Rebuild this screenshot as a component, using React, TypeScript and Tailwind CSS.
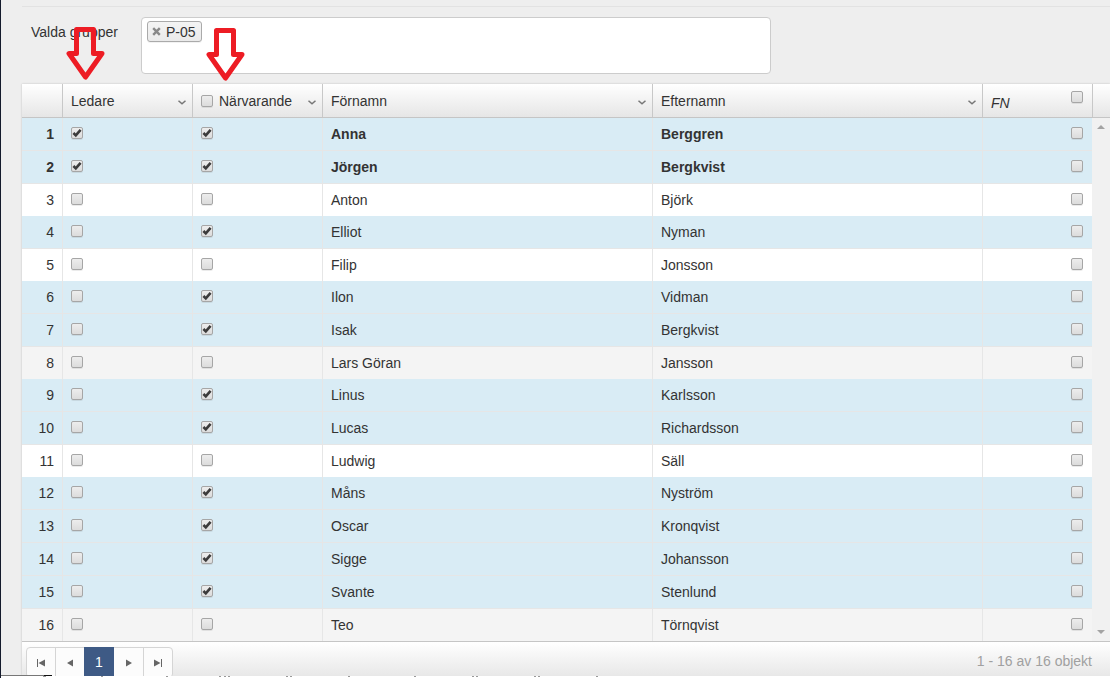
import React, { useState } from 'react';

type Person = {
  first: string;
  last: string;
  leader?: boolean;
  present?: boolean;
  shade?: string;
};

const people: Person[] = [
  { first: 'Anna', last: 'Berggren', leader: true, present: true },
  { first: 'Jörgen', last: 'Bergkvist', leader: true, present: true },
  { first: 'Anton', last: 'Björk' },
  { first: 'Elliot', last: 'Nyman', present: true },
  { first: 'Filip', last: 'Jonsson' },
  { first: 'Ilon', last: 'Vidman', present: true },
  { first: 'Isak', last: 'Bergkvist', present: true },
  { first: 'Lars Göran', last: 'Jansson', shade: 'bg-[#f4f4f4]' },
  { first: 'Linus', last: 'Karlsson', present: true },
  { first: 'Lucas', last: 'Richardsson', present: true },
  { first: 'Ludwig', last: 'Säll' },
  { first: 'Måns', last: 'Nyström', present: true },
  { first: 'Oscar', last: 'Kronqvist', present: true },
  { first: 'Sigge', last: 'Johansson', present: true },
  { first: 'Svante', last: 'Stenlund', present: true },
  { first: 'Teo', last: 'Törnqvist', shade: 'bg-[#f4f4f4]' },
];

const Check: React.FC<{ label: string; checked?: boolean }> = ({ label, checked = false }) => {
  const [on, setOn] = useState(checked);

  return (
    <span className="relative block size-3 shrink-0">
      <input
        type="checkbox"
        aria-label={label}
        checked={on}
        onChange={() => setOn(!on)}
        className="block size-3 appearance-none rounded-[2px] border border-[#a6a6a6] bg-linear-to-b from-[#ededed] to-[#dcdcdc] shadow-[0_1px_0_rgba(0,0,0,0.08)]"
      />
      {on && (
        <svg viewBox="0 0 12 12" className="pointer-events-none absolute inset-0 size-3">
          <path d="M2.4 6 L4.8 8.4 L9.6 2.8" fill="none" stroke="#3c3c3c" strokeWidth="2.6" />
        </svg>
      )}
    </span>
  );
};

const Chevron: React.FC = () => (
  <svg viewBox="0 0 8 5" className="mt-1 h-[5px] w-2 shrink-0">
    <path d="M0.5 0.7 L4 3.8 L7.5 0.7" fill="none" stroke="#777" strokeWidth="1.5" />
  </svg>
);

const Columns: React.FC = () => (
  <colgroup>
    <col className="w-10" />
    <col className="w-[130px]" />
    <col className="w-[130px]" />
    <col />
    <col />
    <col className="w-[110px]" />
  </colgroup>
);

const RedArrow: React.FC<{ className: string }> = ({ className }) => (
  <svg viewBox="0 0 40 54" className={`pointer-events-none absolute h-[54px] w-10 ${className}`}>
    <path
      d="M10.5 2.5 H27.5 V26.5 H36 L19.5 50 L3 26.5 H10.5 Z"
      fill="none"
      stroke="#ed1c24"
      strokeWidth="5"
      strokeLinejoin="round"
    />
  </svg>
);

const pagerButton = 'flex w-[29px] items-center justify-center border-r border-[#d5d5d5]';
const headCell = 'border-l border-[#c8c8c8] pl-2 pr-1.5 text-left font-normal';
const cell = 'border-l border-[#e6e6e6] px-2';
const checkCell = 'border-l border-[#e6e6e6] pl-2 pr-[9px] pb-0.5';

const App: React.FC = () => {
  return (
    <div className="relative overflow-hidden border-l border-[#141a2c] bg-[#eeeeee] font-['Liberation_Sans',Arial,sans-serif] text-sm leading-5 text-[#333]">
      <div className="pl-[21px] pt-1.5">
        <div className="border-t border-[#e2e2e2]" />

        {/* Selected groups */}
        <div className="flex pb-2.5 pl-[9px] pt-2.5">
          <label htmlFor="groups" className="w-[110px] pt-[5px]">Valda grupper</label>
          <div className="mr-[339px] flex h-[57px] grow items-start rounded border border-[#ccc] bg-white p-[3px] pl-[5px]">
            <span className="flex h-[21px] items-center rounded-[3px] border border-[#aaa] bg-linear-to-b from-[#f4f4f4] to-[#eaeaea] pl-1 pr-[5px] shadow-[0_1px_0_rgba(0,0,0,0.05)]">
              <button type="button" aria-label="Ta bort P-05" className="mr-[5px]">
                <svg viewBox="0 0 9 9" className="block size-[9px]">
                  <path d="M1.2 1.2 L7.8 7.8 M7.8 1.2 L1.2 7.8" stroke="#888" strokeWidth="2.4" />
                </svg>
              </button>
              P-05
            </span>
            <input id="groups" type="text" className="h-5 min-w-0 grow px-1 outline-none" />
          </div>
        </div>

        {/* Grid */}
        <div className="bg-white shadow-[0_0_2px_rgba(0,0,0,0.2)]">
          <div className="flex border-b border-[#c5c5c5] bg-linear-to-b from-white to-[#e6e6e6]">
            <table className="w-full grow table-fixed border-separate border-spacing-0">
              <Columns />
              <thead>
                <tr className="h-[33px]">
                  <th aria-label="Nummer" />
                  <th className={headCell}>
                    <div className="flex items-center justify-between">
                      Ledare
                      <Chevron />
                    </div>
                  </th>
                  <th className={headCell}>
                    <div className="flex items-center">
                      <Check label="Alla närvarande" />
                      <span className="ml-1.5 grow">Närvarande</span>
                      <Chevron />
                    </div>
                  </th>
                  <th className={headCell}>
                    <div className="flex items-center justify-between">
                      Förnamn
                      <Chevron />
                    </div>
                  </th>
                  <th className={headCell}>
                    <div className="flex items-center justify-between">
                      Efternamn
                      <Chevron />
                    </div>
                  </th>
                  <th className={headCell}>
                    <div className="flex items-start justify-between pr-[3px]">
                      <i className="pt-1">FN</i>
                      <span className="pt-0.5">
                        <Check label="Alla FN" />
                      </span>
                    </div>
                  </th>
                </tr>
              </thead>
            </table>
            <div className="w-[18px] shrink-0 border-l border-[#c8c8c8]" />
          </div>

          <div className="flex">
            <table className="w-full grow table-fixed border-separate border-spacing-0">
              <Columns />
              <tbody>
                {people.map((p, i) => {
                  const line = p.present ? 'border-b' : '';
                  const row = p.present ? 'h-[33px] bg-[#d9ecf5]' : `h-8 ${p.shade ?? 'bg-white'}`;
                  return (
                    <tr key={i} className={`${row} ${p.leader ? 'font-bold' : ''}`}>
                      <td className={`border-[#e6e6e6] pr-2 text-right ${line}`}>{i + 1}</td>
                      <td className={`${checkCell} ${line}`}>
                        <Check label={`Ledare ${p.first}`} checked={p.leader} />
                      </td>
                      <td className={`${checkCell} ${line}`}>
                        <Check label={`Närvarande ${p.first}`} checked={p.present} />
                      </td>
                      <td className={`${cell} ${line}`}>{p.first}</td>
                      <td className={`${cell} ${line}`}>{p.last}</td>
                      <td className={`${checkCell} ${line}`}>
                        <div className="flex justify-end">
                          <Check label={`FN ${p.first}`} />
                        </div>
                      </td>
                    </tr>
                  );
                })}
              </tbody>
            </table>
            <div className="flex w-[18px] shrink-0 flex-col items-center justify-between bg-[#f1f1f1] py-[7px]">
              <svg viewBox="0 0 8 4" className="h-1 w-2"><path d="M0 4 L4 0 L8 4 Z" fill="#a3a3a3" /></svg>
              <svg viewBox="0 0 8 4" className="h-1 w-2"><path d="M0 0 L4 4 L8 0 Z" fill="#a3a3a3" /></svg>
            </div>
          </div>

          {/* Pager */}
          <div className="flex h-[35px] items-start justify-between overflow-hidden border-t border-[#c5c5c5] bg-linear-to-b from-white to-[#e8e8e8] pl-1 pr-[18px] pt-[5px]">
            <nav className="flex h-[31px] shrink-0 rounded-[4px] border border-[#d5d5d5] bg-[#fcfcfc] text-[#666]">
              <button type="button" aria-label="Första sidan" className={pagerButton}>
                <svg viewBox="0 0 8 8" className="size-2"><path d="M0 0 H1 V8 H0 Z M8 0.5 V7.5 L1.5 4 Z" fill="currentColor" /></svg>
              </button>
              <button type="button" aria-label="Föregående sida" className="flex w-7 items-center justify-center">
                <svg viewBox="0 0 8 8" className="size-2"><path d="M7 0.5 V7.5 L1 4 Z" fill="currentColor" /></svg>
              </button>
              <button type="button" className="-mt-px w-[30px] bg-[#3e5a85] text-white">1</button>
              <button type="button" aria-label="Nästa sida" className="flex w-[30px] items-center justify-center border-r border-[#d5d5d5]">
                <svg viewBox="0 0 8 8" className="size-2"><path d="M1 0.5 V7.5 L7 4 Z" fill="currentColor" /></svg>
              </button>
              <button type="button" aria-label="Sista sidan" className="flex w-7 items-center justify-center">
                <svg viewBox="0 0 8 8" className="size-2"><path d="M7 0 H8 V8 H7 Z M0 0.5 V7.5 L6.5 4 Z" fill="currentColor" /></svg>
              </button>
            </nav>
            <span className="pt-1 text-[#a0a0a0]">1 - 16 av 16 objekt</span>
          </div>
        </div>
      </div>

      <div className="h-0.5 bg-white" />
      <svg viewBox="0 0 620 3" className="absolute bottom-0 left-0 h-[3px] w-[620px]">
        <path d="M0 0.5 H43" stroke="#777" />
        <path d="M43 0.5 H51" stroke="#111" />
        <path
          d="M42 1.5h3M100 1.5h2M165 1.5h2M218 1.5h2M223 1.5h2M227 1.5h2M285 1.5h2M289 1.5h2M347 1.5h2M413 1.5h2M471 1.5h2M475 1.5h2M533 1.5h2M537 1.5h2M595 1.5h2"
          stroke="#999"
        />
      </svg>

      <RedArrow className="left-[65px] top-[27px]" />
      <RedArrow className="left-[205px] top-7" />
    </div>
  );
};

export default App;
